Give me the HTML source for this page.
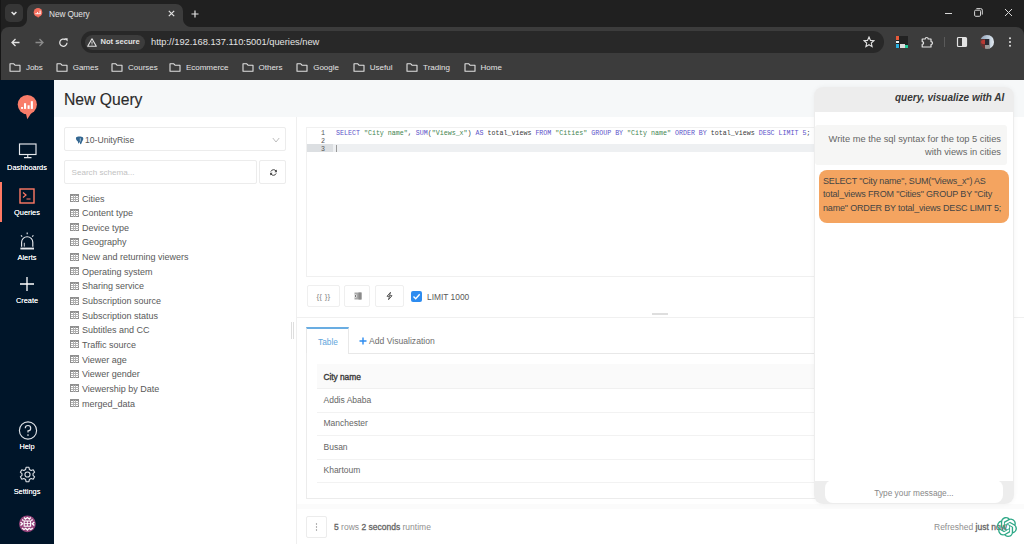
<!DOCTYPE html>
<html><head><meta charset="utf-8">
<style>
*{box-sizing:border-box;margin:0;padding:0}
html,body{width:1024px;height:544px;overflow:hidden;background:#fff;font-family:"Liberation Sans",sans-serif}
.a{position:absolute;white-space:nowrap}
#chrome{position:absolute;left:0;top:0;width:1024px;height:80px;background:#202020}
#toolbar{position:absolute;left:1px;top:27px;width:1023px;height:53px;background:#3c3c3c;border-radius:8px 8px 0 0}
.bm{position:absolute;white-space:nowrap;top:59.5px;height:16px;color:#e3e3e3;font-size:8px;line-height:16px}
.bm svg{position:absolute;left:0;top:3.5px}
.bm span{position:absolute;left:16.8px;top:0}
#side{position:absolute;z-index:2;left:0;top:80px;width:54px;height:464px;background:#001529}
.nl{position:absolute;white-space:nowrap;left:0;width:54px;text-align:center;color:#fff;font-size:7.4px;font-weight:normal;margin-top:0.5px;text-shadow:0 0 0.4px rgba(255,255,255,0.8)}
#main{position:absolute;left:53px;top:80px;width:971px;height:464px;background:#f6f8f9}
.tbl{position:absolute;white-space:nowrap;left:16px;font-size:9px;color:#595959;height:12px;line-height:12px}
.tbl svg{position:absolute;left:1px;top:2px}
.tbl span{position:absolute;left:13px;top:0.6px}
.code{font-family:"Liberation Mono",monospace;font-size:6.65px;line-height:8px}
.kw{color:#5b52c9}
.st{color:#3f8550}
.btn{position:absolute;background:#fff;border:1px solid #ececec;border-radius:2px}
.row{position:absolute;left:264px;width:497px;height:24px;border-bottom:1px solid #f2f2f2;font-size:8.5px;color:#666;line-height:23px;padding-left:6.5px}
</style></head><body>
<div id="chrome">
  <div class="a" style="left:0;top:0;width:1px;height:80px;background:#161616"></div>
  <div class="a" style="left:27px;top:4px;width:156px;height:30px;background:#3c3c3c;border-radius:7px 7px 0 0"></div>
  <div class="a" style="left:19px;top:19px;width:8px;height:8px;background:radial-gradient(circle at 0 0,#202020 7.5px,#3c3c3c 8.5px)"></div>
  <div class="a" style="left:183px;top:19px;width:8px;height:8px;background:radial-gradient(circle at 100% 0,#202020 7.5px,#3c3c3c 8.5px)"></div>
  <div class="a" style="left:5px;top:4px;width:18px;height:18px;border-radius:5px;background:#363636"></div>
  <svg class="a" style="left:9px;top:8px" width="10" height="10" viewBox="0 0 10 10"><path d="M2.6 4 L5 6.4 L7.4 4" stroke="#e3e3e3" stroke-width="1.5" fill="none"/></svg>
  <svg class="a" style="left:32px;top:7px" width="12" height="13" viewBox="0 0 12 13"><circle cx="6" cy="5.4" r="4.3" fill="#f56f5e"/><path d="M5 8.5 L6 11 L8 8.3Z" fill="#f56f5e"/><rect x="3.3" y="6.3" width="5.5" height="0.9" fill="#fff"/><rect x="5" y="5" width="0.9" height="1.5" fill="#fff"/><rect x="7.6" y="3.6" width="1" height="3" fill="#fff"/></svg>
  <div class="a" style="left:49px;top:9px;color:#e3e3e3;font-size:8.3px;letter-spacing:-0.1px">New Query</div>
  <svg class="a" style="left:168px;top:10px" width="7" height="7" viewBox="0 0 7 7"><path d="M0.8 0.8 L6.2 6.2 M6.2 0.8 L0.8 6.2" stroke="#e3e3e3" stroke-width="1.2"/></svg>
  <svg class="a" style="left:191px;top:9.5px" width="8" height="8" viewBox="0 0 8 8"><path d="M4 0.5 V7.5 M0.5 4 H7.5" stroke="#e3e3e3" stroke-width="1.2"/></svg>
  <div class="a" style="left:945px;top:13px;width:7px;height:1px;background:#d8d8d8"></div>
  <svg class="a" style="left:973.5px;top:8.3px" width="9" height="9" viewBox="0 0 9 9"><rect x="0.6" y="2.2" width="5.9" height="6.1" rx="1.1" stroke="#d8d8d8" stroke-width="1" fill="none"/><path d="M2.4 0.6 H6.6 A1.6 1.6 0 0 1 8.3 2.2 V6.6" stroke="#d8d8d8" stroke-width="1" fill="none"/></svg>
  <svg class="a" style="left:1004px;top:8px" width="9" height="9" viewBox="0 0 9 9"><path d="M1 1 L8 8 M8 1 L1 8" stroke="#d8d8d8" stroke-width="1"/></svg>
</div>
<div id="toolbar">
  <svg class="a" style="left:10px;top:10.5px" width="9" height="9" viewBox="0 0 9 9"><path d="M8.5 4.5 H1 M4.5 1 L1 4.5 L4.5 8" stroke="#e3e3e3" stroke-width="1.3" fill="none"/></svg>
  <svg class="a" style="left:34px;top:10.5px" width="9" height="9" viewBox="0 0 9 9"><path d="M0.5 4.5 H8 M4.5 1 L8 4.5 L4.5 8" stroke="#8a8a8a" stroke-width="1.3" fill="none"/></svg>
  <svg class="a" style="left:58.3px;top:10.5px" width="9" height="9" viewBox="0 0 9 9"><path d="M8 4.8 A3.6 3.6 0 1 1 6.6 1.8" stroke="#e3e3e3" stroke-width="1.25" fill="none"/><path d="M5.2 0.2 H8.6 V3.6Z" fill="#e3e3e3"/></svg>
  <div class="a" style="left:80px;top:4px;width:803px;height:22px;border-radius:11px;background:#282828"></div>
  <div class="a" style="left:84px;top:8px;width:60px;height:15px;border-radius:8px;background:#3c3c3c"></div>
  <svg class="a" style="left:86px;top:10.5px" width="10" height="9" viewBox="0 0 10 9"><path d="M5 0.8 L9.3 8.3 H0.7Z" stroke="#e3e3e3" stroke-width="1.1" fill="none" stroke-linejoin="round"/><path d="M5 3.5 V5.8 M5 6.5 V7.3" stroke="#e3e3e3" stroke-width="1"/></svg>
  <div class="a" style="left:99.5px;top:10px;color:#e3e3e3;font-size:7.6px;font-weight:bold">Not secure</div>
  <div class="a" style="left:150px;top:9.5px;color:#e3e3e3;font-size:9.3px">http://192.168.137.110:5001/queries/new</div>
  <svg class="a" style="left:862px;top:9px" width="12" height="12" viewBox="0 0 12 12"><path d="M6 1 L7.5 4.4 L11 4.7 L8.3 7 L9.1 10.6 L6 8.7 L2.9 10.6 L3.7 7 L1 4.7 L4.5 4.4Z" stroke="#e3e3e3" stroke-width="1.1" fill="none"/></svg>
  <div class="a" style="left:895px;top:9px;width:12px;height:12px;background:#222"><div class="a" style="left:0;top:0;width:3px;height:4px;background:#e85a3a"></div><div class="a" style="left:0;top:8px;width:3px;height:4px;background:#2ab0e0"></div><div class="a" style="left:4px;top:8px;width:5px;height:4px;background:#ddd"></div><div class="a" style="left:9px;top:9px;width:3px;height:3px;background:#2c9"></div><div class="a" style="left:0;top:5px;width:3px;height:2px;background:#eee"></div></div>
  <svg class="a" style="left:919.5px;top:8.8px" width="13" height="12" viewBox="0 0 13 12"><path d="M1.2 3 H4.2 A1.5 1.5 0 0 1 7.2 3 H10 V5.6 A1.5 1.5 0 0 1 10 8.6 V11 H1.2 V8.4 A1.4 1.4 0 0 0 1.2 5.6Z" stroke="#e3e3e3" stroke-width="1.2" fill="none" stroke-linejoin="round"/></svg>
  <div class="a" style="left:943px;top:10px;width:1px;height:10px;background:#5a5a5a"></div>
  <svg class="a" style="left:955px;top:9px" width="12" height="12" viewBox="0 0 12 12"><rect x="1.5" y="1.5" width="9" height="9" rx="1" stroke="#e3e3e3" stroke-width="1.2" fill="none"/><rect x="6" y="2" width="4" height="8" fill="#e3e3e3"/></svg>
  <div class="a" style="left:978.5px;top:7.8px;width:14px;height:14px;border-radius:50%;overflow:hidden;background:linear-gradient(90deg,#5a3a38 0,#6a3030 35%,#3a3a44 55%,#c8d4e0 75%,#e8eef4 100%)"><div class="a" style="left:1px;top:5px;width:6px;height:4px;background:#b83a34;border-radius:2px"></div><div class="a" style="left:5px;top:2px;width:4px;height:9px;background:#2a2a32"></div><div class="a" style="left:5px;top:10px;width:5px;height:4px;background:#9a9a9a"></div><div class="a" style="left:0;top:0;width:14px;height:4px;background:linear-gradient(90deg,#8aa0b8,#dfe8f0)"></div></div>
  <svg class="a" style="left:1006.3px;top:9px" width="6" height="12" viewBox="0 0 6 12"><circle cx="3" cy="2.3" r="1" fill="#e3e3e3"/><circle cx="3" cy="6" r="1" fill="#e3e3e3"/><circle cx="3" cy="9.8" r="1" fill="#e3e3e3"/></svg>
</div>
<!-- bookmarks -->
<div class="bm" style="left:9.1px"><svg width="12" height="9" viewBox="0 0 12 9"><path d="M1 0.8 H4.8 L6 2.2 H11 V8.2 H1Z" stroke="#e0e0e0" stroke-width="1.1" fill="none" stroke-linejoin="round"/></svg><span>Jobs</span></div>
<div class="bm" style="left:55.9px"><svg width="12" height="9" viewBox="0 0 12 9"><path d="M1 0.8 H4.8 L6 2.2 H11 V8.2 H1Z" stroke="#e0e0e0" stroke-width="1.1" fill="none" stroke-linejoin="round"/></svg><span>Games</span></div>
<div class="bm" style="left:111.2px"><svg width="12" height="9" viewBox="0 0 12 9"><path d="M1 0.8 H4.8 L6 2.2 H11 V8.2 H1Z" stroke="#e0e0e0" stroke-width="1.1" fill="none" stroke-linejoin="round"/></svg><span>Courses</span></div>
<div class="bm" style="left:169.1px"><svg width="12" height="9" viewBox="0 0 12 9"><path d="M1 0.8 H4.8 L6 2.2 H11 V8.2 H1Z" stroke="#e0e0e0" stroke-width="1.1" fill="none" stroke-linejoin="round"/></svg><span>Ecommerce</span></div>
<div class="bm" style="left:241.7px"><svg width="12" height="9" viewBox="0 0 12 9"><path d="M1 0.8 H4.8 L6 2.2 H11 V8.2 H1Z" stroke="#e0e0e0" stroke-width="1.1" fill="none" stroke-linejoin="round"/></svg><span>Others</span></div>
<div class="bm" style="left:296.4px"><svg width="12" height="9" viewBox="0 0 12 9"><path d="M1 0.8 H4.8 L6 2.2 H11 V8.2 H1Z" stroke="#e0e0e0" stroke-width="1.1" fill="none" stroke-linejoin="round"/></svg><span>Google</span></div>
<div class="bm" style="left:353.0px"><svg width="12" height="9" viewBox="0 0 12 9"><path d="M1 0.8 H4.8 L6 2.2 H11 V8.2 H1Z" stroke="#e0e0e0" stroke-width="1.1" fill="none" stroke-linejoin="round"/></svg><span>Useful</span></div>
<div class="bm" style="left:406.3px"><svg width="12" height="9" viewBox="0 0 12 9"><path d="M1 0.8 H4.8 L6 2.2 H11 V8.2 H1Z" stroke="#e0e0e0" stroke-width="1.1" fill="none" stroke-linejoin="round"/></svg><span>Trading</span></div>
<div class="bm" style="left:463.7px"><svg width="12" height="9" viewBox="0 0 12 9"><path d="M1 0.8 H4.8 L6 2.2 H11 V8.2 H1Z" stroke="#e0e0e0" stroke-width="1.1" fill="none" stroke-linejoin="round"/></svg><span>Home</span></div>

<div id="side">
  <svg class="a" style="left:17px;top:15px" width="21" height="25" viewBox="0 0 21 25"><circle cx="10.3" cy="9.6" r="9.6" fill="#f97d6a"/><path d="M8.3 16 L10.3 24.2 L15.5 16Z" fill="#f97d6a"/><rect x="4.1" y="12" width="1.9" height="1.9" fill="#fff"/><rect x="7" y="8.2" width="2.1" height="5.7" fill="#fff"/><rect x="10.6" y="10.3" width="2" height="3.6" fill="#fff"/><rect x="13.8" y="6.2" width="2.1" height="7.7" fill="#fff"/></svg>
  <!-- dashboards -->
  <svg class="a" style="left:17.5px;top:62.5px" width="20" height="16" viewBox="0 0 20 16"><rect x="1.5" y="1" width="16.5" height="10.5" stroke="#e6e9ed" stroke-width="1.15" fill="none"/><path d="M9.75 11.5 V14.5 M6 14.6 H13.5" stroke="#e6e9ed" stroke-width="1.15"/></svg>
  <div class="nl" style="top:82px">Dashboards</div>
  <div class="a" style="left:0;top:102px;width:2px;height:40px;background:#ff7964"></div>
  <svg class="a" style="left:19px;top:108px" width="16" height="16" viewBox="0 0 16 16"><rect x="1" y="1" width="14" height="14" stroke="#ff7964" stroke-width="1.4" fill="none"/><path d="M4 4.5 L7 7 L4 9.5 M7.5 11 H11.5" stroke="#ff7964" stroke-width="1.2" fill="none"/></svg>
  <div class="nl" style="top:127px">Queries</div>
  <svg class="a" style="left:17px;top:151px" width="20" height="20" viewBox="0 0 20 20"><g stroke="#e6e9ed" fill="none" stroke-width="1.15"><path d="M10.2 1.4 V3.2 M4 4.4 L5.2 5.6 M16.4 4.4 L15.2 5.6"/><path d="M4.6 15.8 V11.3 A5.6 5.6 0 0 1 15.8 11.3 V15.8"/><path d="M7.3 11.8 V15.6" stroke-width="0.9"/></g><rect x="3.4" y="16.6" width="13.6" height="1.9" fill="#e6e9ed"/></svg>
  <div class="nl" style="top:172.7px">Alerts</div>
  <svg class="a" style="left:20px;top:197px" width="14" height="14" viewBox="0 0 14 14"><path d="M7 0 V14 M0 7 H14" stroke="#fff" stroke-width="1.3"/></svg>
  <div class="nl" style="top:215.2px">Create</div>
  <svg class="a" style="left:17.5px;top:340.5px" width="20" height="20" viewBox="0 0 20 20"><circle cx="10" cy="9.5" r="8.6" stroke="#dde1e6" stroke-width="1.15" fill="none"/><path d="M7.3 7.2 A2.7 2.7 0 1 1 10 9.9 V11.6" stroke="#dde1e6" stroke-width="1.2" fill="none"/><circle cx="10" cy="14" r="0.85" fill="#dde1e6"/></svg>
  <div class="nl" style="top:361.6px">Help</div>
  <svg class="a" style="left:18.5px;top:385.5px" width="17" height="17" viewBox="0 0 20 20"><path d="M8.3 1.5 H11.7 L12.2 4 L14.3 5.2 L16.7 4.4 L18.4 7.3 L16.5 9 V11 L18.4 12.7 L16.7 15.6 L14.3 14.8 L12.2 16 L11.7 18.5 H8.3 L7.8 16 L5.7 14.8 L3.3 15.6 L1.6 12.7 L3.5 11 V9 L1.6 7.3 L3.3 4.4 L5.7 5.2 L7.8 4Z" stroke="#dde1e6" stroke-width="1.3" fill="none" stroke-linejoin="round"/><circle cx="10" cy="10" r="3" stroke="#dde1e6" stroke-width="1.3" fill="none"/></svg>
  <div class="nl" style="top:406.4px">Settings</div>
  <svg class="a" style="left:18.8px;top:435px" width="17" height="18" viewBox="0 0 17 18"><circle cx="8.4" cy="8.8" r="8.4" fill="#96457c"/><g stroke="#fff" fill="none" stroke-width="1.35"><path d="M5 2.5 L6.5 4 L8.4 2.5 L10.3 4 L11.8 2.5"/><rect x="5.2" y="6" width="6.4" height="5.2" stroke-width="1.1"/><path d="M8.4 6 V11.2 M5.2 8.6 H11.6" stroke-width="0.9"/><path d="M1.5 7 L3.5 8.8 L1.5 10.6 M15.3 7 L13.3 8.8 L15.3 10.6"/><path d="M3 13 L5 14.5 L6.7 13.3 L8.4 15 L10.1 13.3 L11.8 14.5 L13.8 13"/><path d="M3.2 4.5 L4.5 5.8 M13.6 4.5 L12.3 5.8"/></g></svg>
</div>

<div id="main">
  <div class="a" style="left:11px;top:11px;font-size:15.7px;color:#2b2b2b;-webkit-text-stroke:0.15px #2b2b2b">New Query</div>

  <!-- right query pane -->
  <div class="a" style="left:244px;top:37px;width:727px;height:427px;background:#fff"></div>
  <!-- editor -->
  <div class="a" style="left:253px;top:47px;width:707px;height:150px;border:1px solid #f0f0f0;background:#fff"></div>
  <div class="a" style="left:254px;top:64px;width:26px;height:8px;background:#dcdfe2"></div>
  <div class="a" style="left:280px;top:64px;width:679px;height:8px;background:#eef0f2"></div>
  <div class="a code" style="left:254px;top:48.7px;width:18px;text-align:right;color:#555">1<br>2<br>3</div>
  <div class="a code" style="left:283px;top:48.7px;color:#3a3a3a"><span class="kw">SELECT</span> <span class="st">"City name"</span>, <span class="kw">SUM</span>(<span class="st">"Views_x"</span>) <span class="kw">AS</span> total_views <span class="kw">FROM</span> <span class="st">"Cities"</span> <span class="kw">GROUP BY</span> <span class="st">"City name"</span> <span class="kw">ORDER BY</span> total_views <span class="kw">DESC LIMIT</span> <span class="kw">5</span>;</div>
  <div class="a" style="left:283px;top:65px;width:1px;height:7px;background:#999"></div>
  <!-- buttons -->
  <div class="btn" style="left:253.5px;top:204.5px;width:33px;height:22px;border-color:#efefef"></div>
  <div class="a" style="left:263.5px;top:211.5px;font-size:8px;color:#888;letter-spacing:0.2px">{{ }}</div>
  <div class="btn" style="left:291px;top:204.5px;width:26px;height:22px;border-color:#efefef"></div>
  <svg class="a" style="left:300.5px;top:212px" width="8" height="8" viewBox="0 0 8 8"><rect x="0.5" y="0.5" width="7" height="7" fill="#a8a8a8"/><rect x="4.5" y="0.5" width="3" height="7" fill="#8a8a8a"/><rect x="0.5" y="2.5" width="2" height="3" fill="#fff"/><rect x="1" y="3.2" width="1" height="1.6" fill="#555"/></svg>
  <div class="btn" style="left:321.5px;top:204.5px;width:29px;height:22px;border-color:#efefef"></div>
  <svg class="a" style="left:333px;top:211.5px" width="7" height="8" viewBox="0 0 7 8"><path d="M4.5 0.3 L1 4.3 H3.5 L2.5 7.7 L6 3.7 H3.5Z" stroke="#555" stroke-width="1" fill="none" stroke-linejoin="round"/></svg>
  <div class="a" style="left:358px;top:210.5px;width:11px;height:11px;border-radius:2px;background:#2d8cf0"></div>
  <svg class="a" style="left:358px;top:210.5px" width="11" height="11" viewBox="0 0 11 11"><path d="M2.5 5.5 L4.7 7.7 L8.7 3.3" stroke="#fff" stroke-width="1.4" fill="none"/></svg>
  <div class="a" style="left:374px;top:211.5px;font-size:8.4px;color:#595959">LIMIT 1000</div>
  <div class="a" style="left:244px;top:237px;width:727px;height:1px;background:#f0f0f0"></div>
  <div class="a" style="left:599px;top:233px;width:16px;height:1.5px;background:#dedede"></div>
  <!-- tabs -->
  <div class="a" style="left:253px;top:247px;width:43px;height:27px;border:1px solid #e8e8e8;border-bottom:none;border-top:2px solid #69ade2;background:#fff"></div>
  <div class="a" style="left:265px;top:256.5px;font-size:8.3px;color:#62a6dc">Table</div>
  <svg class="a" style="left:306px;top:257px" width="8" height="8" viewBox="0 0 8 8"><path d="M4 0.5 V7.5 M0.5 4 H7.5" stroke="#2d8cf0" stroke-width="1.4"/></svg>
  <div class="a" style="left:316px;top:256px;font-size:8.6px;color:#6e6e6e">Add Visualization</div>
  <div class="a" style="left:295px;top:273px;width:665px;height:1px;background:#e8e8e8"></div>
  <!-- table -->
  <div class="a" style="left:253px;top:273px;width:707px;height:146px;border:1px solid #ececec;border-top:none"></div>
  <div class="a" style="left:264px;top:284px;width:696px;height:25px;background:#fafafa;border-bottom:1px solid #f0f0f0"></div>
  <div class="a" style="left:270.5px;top:291.5px;font-size:8.4px;color:#3a3a3a;-webkit-text-stroke:0.35px #3a3a3a;letter-spacing:-0.05px">City name</div>
  <div class="row" style="top:309px">Addis Ababa</div>
  <div class="row" style="top:332px">Manchester</div>
  <div class="row" style="top:356px">Busan</div>
  <div class="row" style="top:379px">Khartoum</div>
  <!-- footer -->
  <div class="a" style="left:244px;top:424px;width:727px;height:5px;background:#fbfbfb"></div>
  <div class="btn" style="left:253px;top:436px;width:21px;height:22px"></div>
  <svg class="a" style="left:262px;top:442px" width="3" height="10" viewBox="0 0 3 10"><circle cx="1.5" cy="2" r="0.65" fill="#888"/><circle cx="1.5" cy="5" r="0.65" fill="#888"/><circle cx="1.5" cy="8" r="0.65" fill="#888"/></svg>
  <div class="a" style="left:281px;top:442px;font-size:8.5px;color:#8f8f8f"><span style="color:#666;-webkit-text-stroke:0.3px #666">5</span> rows <span style="color:#666;-webkit-text-stroke:0.3px #666">2 seconds</span> runtime</div>
  <div class="a" style="left:881px;top:442px;font-size:8.5px;color:#8f8f8f">Refreshed <span style="color:#666;-webkit-text-stroke:0.3px #666">just now</span></div>
  <!-- chat panel -->
  <div class="a" style="left:761px;top:7px;width:200px;height:417px;border-radius:9px;background:#ededed;box-shadow:0 0 5px rgba(0,0,0,0.05)"></div>
  <div class="a" style="left:762px;top:32px;width:198px;height:369px;background:#fff"></div>
  <div class="a" style="left:842px;top:11.5px;font-size:10px;font-weight:bold;font-style:italic;color:#383838">query, visualize with AI</div>
  <div class="a" style="left:762px;top:45px;width:192px;height:40px;background:#f6f6f5;border-radius:3px"></div>
  <div class="a" style="left:762px;top:52.6px;width:186px;text-align:right;font-size:9.3px;line-height:13.2px;color:#666;white-space:normal">Write me the sql syntax for the top 5 cities<br>with views in cities</div>
  <div class="a" style="left:766px;top:90px;width:190px;height:53px;background:#f4a460;border-radius:8px"></div>
  <div class="a" style="left:770px;top:94.8px;font-size:9px;letter-spacing:-0.17px;line-height:13.5px;color:#444">SELECT "City name", SUM("Views_x") AS<br>total_views FROM "Cities" GROUP BY "City<br>name" ORDER BY total_views DESC LIMIT 5;</div>
  <div class="a" style="left:772px;top:400px;width:178px;height:23px;background:#fff;border-radius:8px"></div>
  <div class="a" style="left:772px;top:407.5px;width:178px;text-align:center;font-size:8.3px;color:#888">Type your message...</div>
  <svg class="a" style="left:944px;top:437px" width="20" height="20" viewBox="0 0 24 24"><path fill="#2ea887" d="M22.28 9.82a5.98 5.98 0 0 0-.52-4.91 6.05 6.05 0 0 0-6.51-2.9A6.07 6.07 0 0 0 4.98 4.18a5.98 5.98 0 0 0-4 2.9 6.05 6.05 0 0 0 .74 7.1 5.98 5.98 0 0 0 .51 4.91 6.05 6.05 0 0 0 6.51 2.9A5.98 5.98 0 0 0 13.26 24a6.06 6.06 0 0 0 5.77-4.21 5.99 5.99 0 0 0 4-2.9 6.06 6.06 0 0 0-.75-7.07zm-9.02 12.61a4.48 4.48 0 0 1-2.88-1.04l.14-.08 4.78-2.76a.8.8 0 0 0 .39-.68v-6.74l2.02 1.17a.07.07 0 0 1 .04.05v5.58a4.5 4.5 0 0 1-4.49 4.5zm-9.66-4.13a4.47 4.47 0 0 1-.53-3.01l.14.09 4.78 2.76a.77.77 0 0 0 .78 0l5.84-3.37v2.33a.08.08 0 0 1-.03.06L9.74 19.95a4.5 4.5 0 0 1-6.14-1.65zM2.34 7.9a4.49 4.49 0 0 1 2.37-1.97V11.6a.77.77 0 0 0 .39.68l5.81 3.35-2.02 1.17a.08.08 0 0 1-.07 0l-4.83-2.79A4.5 4.5 0 0 1 2.34 7.87zm16.6 3.86l-5.84-3.39 2.02-1.16a.08.08 0 0 1 .07 0l4.83 2.79a4.49 4.49 0 0 1-.68 8.1v-5.68a.79.79 0 0 0-.4-.66zm2.01-3.02l-.14-.09-4.77-2.78a.78.78 0 0 0-.79 0L9.41 9.23V6.9a.07.07 0 0 1 .03-.06l4.83-2.79a4.5 4.5 0 0 1 6.68 4.66zM8.31 12.86l-2.02-1.16a.08.08 0 0 1-.04-.06V6.07a4.5 4.5 0 0 1 7.38-3.45l-.14.08L8.7 5.46a.8.8 0 0 0-.39.68zm1.1-2.37l2.6-1.5 2.61 1.5v3l-2.6 1.5-2.61-1.5z"/></svg>
  <!-- left schema panel -->
  <div class="a" style="left:0;top:37px;width:243px;height:427px;background:#fff"></div>
  <div class="a" style="left:243px;top:37px;width:1px;height:427px;background:#efefef"></div>
  <div class="a" style="left:238px;top:242px;width:1px;height:17px;background:#dedede"></div>
  <div class="a" style="left:240px;top:242px;width:1px;height:17px;background:#dedede"></div>
  <div class="btn" style="left:11px;top:47px;width:222px;height:24px"></div>
  <svg class="a" style="left:21.5px;top:55.5px" width="9" height="9" viewBox="0 0 9 9"><path d="M1.2 1.2 C2 0.3 6.5 0.2 7.8 1.2 C8.6 2 8.4 4 7.5 4.8 C7.2 5.2 7 5.8 6.8 6.5 C6.5 7.3 6 8.5 5.3 8.2 C4.9 8 5.2 6.5 4.8 6 C4.3 6 4.2 7.6 3.6 7.5 C3 7.4 3.1 5.8 2.6 5.2 C1.5 4.8 0.4 2.2 1.2 1.2Z" fill="#336791"/><path d="M5.3 2.2 V5.5" stroke="#fff" stroke-width="0.6"/></svg>
  <div class="a" style="left:32px;top:54.5px;font-size:8.6px;color:#595959">10-UnityRise</div>
  <svg class="a" style="left:218.5px;top:56.5px" width="8" height="7" viewBox="0 0 8 7"><path d="M0.8 1 L4 5 L7.2 1" stroke="#b5b5b5" stroke-width="0.9" fill="none"/></svg>
  <div class="btn" style="left:11px;top:80px;width:193px;height:24px"></div>
  <div class="a" style="left:18.5px;top:87.5px;font-size:8.1px;color:#c2c2c2">Search schema...</div>
  <div class="btn" style="left:206px;top:80px;width:27px;height:24px"></div>
  <svg class="a" style="left:215.5px;top:88px" width="9" height="9" viewBox="0 0 9 9"><path d="M7.2 3.2 A3 3 0 0 0 1.8 3.6 M1.8 5.8 A3 3 0 0 0 7.2 5.4" stroke="#444" stroke-width="1" fill="none"/><path d="M7.9 1.6 V4.2 H5.4Z M1.1 7.4 V4.8 H3.6Z" fill="#444"/></svg>
  <div class="tbl" style="top:112.0px"><svg width="9" height="8" viewBox="0 0 9 8" shape-rendering="crispEdges"><path d="M0.5 0.5 H8.5 V7.5 H0.5Z M0.5 1.5 H8.5" stroke="#8f8f8f" stroke-width="1" fill="none"/><path d="M0.5 3.5 H8.5 M0.5 5.5 H8.5 M3.5 0.5 V7.5 M5.5 0.5 V7.5" stroke="#b0b0b0" stroke-width="1"/></svg><span>Cities</span></div>
<div class="tbl" style="top:126.6px"><svg width="9" height="8" viewBox="0 0 9 8" shape-rendering="crispEdges"><path d="M0.5 0.5 H8.5 V7.5 H0.5Z M0.5 1.5 H8.5" stroke="#8f8f8f" stroke-width="1" fill="none"/><path d="M0.5 3.5 H8.5 M0.5 5.5 H8.5 M3.5 0.5 V7.5 M5.5 0.5 V7.5" stroke="#b0b0b0" stroke-width="1"/></svg><span>Content type</span></div>
<div class="tbl" style="top:141.3px"><svg width="9" height="8" viewBox="0 0 9 8" shape-rendering="crispEdges"><path d="M0.5 0.5 H8.5 V7.5 H0.5Z M0.5 1.5 H8.5" stroke="#8f8f8f" stroke-width="1" fill="none"/><path d="M0.5 3.5 H8.5 M0.5 5.5 H8.5 M3.5 0.5 V7.5 M5.5 0.5 V7.5" stroke="#b0b0b0" stroke-width="1"/></svg><span>Device type</span></div>
<div class="tbl" style="top:155.9px"><svg width="9" height="8" viewBox="0 0 9 8" shape-rendering="crispEdges"><path d="M0.5 0.5 H8.5 V7.5 H0.5Z M0.5 1.5 H8.5" stroke="#8f8f8f" stroke-width="1" fill="none"/><path d="M0.5 3.5 H8.5 M0.5 5.5 H8.5 M3.5 0.5 V7.5 M5.5 0.5 V7.5" stroke="#b0b0b0" stroke-width="1"/></svg><span>Geography</span></div>
<div class="tbl" style="top:170.6px"><svg width="9" height="8" viewBox="0 0 9 8" shape-rendering="crispEdges"><path d="M0.5 0.5 H8.5 V7.5 H0.5Z M0.5 1.5 H8.5" stroke="#8f8f8f" stroke-width="1" fill="none"/><path d="M0.5 3.5 H8.5 M0.5 5.5 H8.5 M3.5 0.5 V7.5 M5.5 0.5 V7.5" stroke="#b0b0b0" stroke-width="1"/></svg><span>New and returning viewers</span></div>
<div class="tbl" style="top:185.2px"><svg width="9" height="8" viewBox="0 0 9 8" shape-rendering="crispEdges"><path d="M0.5 0.5 H8.5 V7.5 H0.5Z M0.5 1.5 H8.5" stroke="#8f8f8f" stroke-width="1" fill="none"/><path d="M0.5 3.5 H8.5 M0.5 5.5 H8.5 M3.5 0.5 V7.5 M5.5 0.5 V7.5" stroke="#b0b0b0" stroke-width="1"/></svg><span>Operating system</span></div>
<div class="tbl" style="top:199.8px"><svg width="9" height="8" viewBox="0 0 9 8" shape-rendering="crispEdges"><path d="M0.5 0.5 H8.5 V7.5 H0.5Z M0.5 1.5 H8.5" stroke="#8f8f8f" stroke-width="1" fill="none"/><path d="M0.5 3.5 H8.5 M0.5 5.5 H8.5 M3.5 0.5 V7.5 M5.5 0.5 V7.5" stroke="#b0b0b0" stroke-width="1"/></svg><span>Sharing service</span></div>
<div class="tbl" style="top:214.5px"><svg width="9" height="8" viewBox="0 0 9 8" shape-rendering="crispEdges"><path d="M0.5 0.5 H8.5 V7.5 H0.5Z M0.5 1.5 H8.5" stroke="#8f8f8f" stroke-width="1" fill="none"/><path d="M0.5 3.5 H8.5 M0.5 5.5 H8.5 M3.5 0.5 V7.5 M5.5 0.5 V7.5" stroke="#b0b0b0" stroke-width="1"/></svg><span>Subscription source</span></div>
<div class="tbl" style="top:229.1px"><svg width="9" height="8" viewBox="0 0 9 8" shape-rendering="crispEdges"><path d="M0.5 0.5 H8.5 V7.5 H0.5Z M0.5 1.5 H8.5" stroke="#8f8f8f" stroke-width="1" fill="none"/><path d="M0.5 3.5 H8.5 M0.5 5.5 H8.5 M3.5 0.5 V7.5 M5.5 0.5 V7.5" stroke="#b0b0b0" stroke-width="1"/></svg><span>Subscription status</span></div>
<div class="tbl" style="top:243.8px"><svg width="9" height="8" viewBox="0 0 9 8" shape-rendering="crispEdges"><path d="M0.5 0.5 H8.5 V7.5 H0.5Z M0.5 1.5 H8.5" stroke="#8f8f8f" stroke-width="1" fill="none"/><path d="M0.5 3.5 H8.5 M0.5 5.5 H8.5 M3.5 0.5 V7.5 M5.5 0.5 V7.5" stroke="#b0b0b0" stroke-width="1"/></svg><span>Subtitles and CC</span></div>
<div class="tbl" style="top:258.4px"><svg width="9" height="8" viewBox="0 0 9 8" shape-rendering="crispEdges"><path d="M0.5 0.5 H8.5 V7.5 H0.5Z M0.5 1.5 H8.5" stroke="#8f8f8f" stroke-width="1" fill="none"/><path d="M0.5 3.5 H8.5 M0.5 5.5 H8.5 M3.5 0.5 V7.5 M5.5 0.5 V7.5" stroke="#b0b0b0" stroke-width="1"/></svg><span>Traffic source</span></div>
<div class="tbl" style="top:273.0px"><svg width="9" height="8" viewBox="0 0 9 8" shape-rendering="crispEdges"><path d="M0.5 0.5 H8.5 V7.5 H0.5Z M0.5 1.5 H8.5" stroke="#8f8f8f" stroke-width="1" fill="none"/><path d="M0.5 3.5 H8.5 M0.5 5.5 H8.5 M3.5 0.5 V7.5 M5.5 0.5 V7.5" stroke="#b0b0b0" stroke-width="1"/></svg><span>Viewer age</span></div>
<div class="tbl" style="top:287.7px"><svg width="9" height="8" viewBox="0 0 9 8" shape-rendering="crispEdges"><path d="M0.5 0.5 H8.5 V7.5 H0.5Z M0.5 1.5 H8.5" stroke="#8f8f8f" stroke-width="1" fill="none"/><path d="M0.5 3.5 H8.5 M0.5 5.5 H8.5 M3.5 0.5 V7.5 M5.5 0.5 V7.5" stroke="#b0b0b0" stroke-width="1"/></svg><span>Viewer gender</span></div>
<div class="tbl" style="top:302.3px"><svg width="9" height="8" viewBox="0 0 9 8" shape-rendering="crispEdges"><path d="M0.5 0.5 H8.5 V7.5 H0.5Z M0.5 1.5 H8.5" stroke="#8f8f8f" stroke-width="1" fill="none"/><path d="M0.5 3.5 H8.5 M0.5 5.5 H8.5 M3.5 0.5 V7.5 M5.5 0.5 V7.5" stroke="#b0b0b0" stroke-width="1"/></svg><span>Viewership by Date</span></div>
<div class="tbl" style="top:317.0px"><svg width="9" height="8" viewBox="0 0 9 8" shape-rendering="crispEdges"><path d="M0.5 0.5 H8.5 V7.5 H0.5Z M0.5 1.5 H8.5" stroke="#8f8f8f" stroke-width="1" fill="none"/><path d="M0.5 3.5 H8.5 M0.5 5.5 H8.5 M3.5 0.5 V7.5 M5.5 0.5 V7.5" stroke="#b0b0b0" stroke-width="1"/></svg><span>merged_data</span></div>
</div>
</body></html>
